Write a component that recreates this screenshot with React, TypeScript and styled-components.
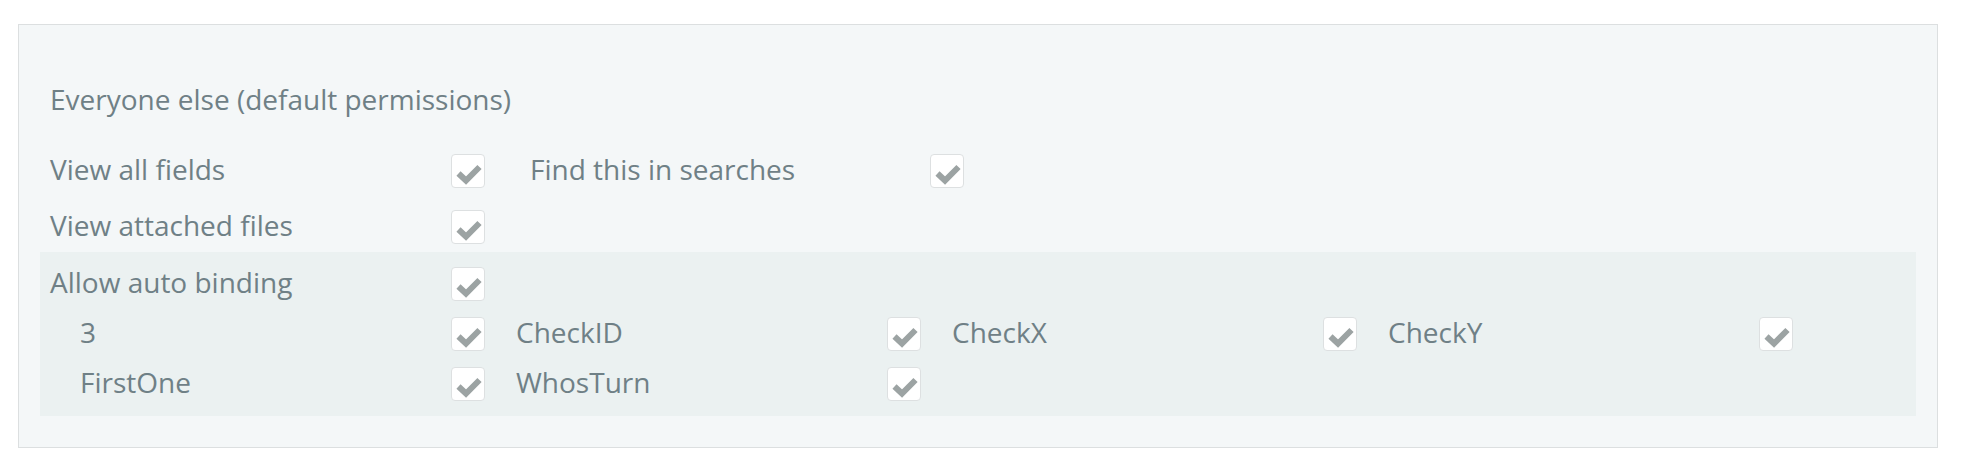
import React from "react";
import styled, { createGlobalStyle } from "styled-components";

const GlobalStyle = createGlobalStyle`
  body {
    margin: 0;
    background: #ffffff;
    font-family: "Open Sans", "Liberation Sans", sans-serif;
  }
`;

const Panel = styled.div`
  box-sizing: border-box;
  width: 1920px;
  margin: 24px 0 0 18px;
  padding: 55px 21px 31px;
  border: 1px solid #dcdfe0;
  background-color: #f4f7f8;
`;

const Heading = styled.div`
  padding-left: 10px;
  margin-bottom: 28px;
  font-size: 28px;
  line-height: 38px;
  color: #6f8086;
`;

const TopRows = styled.div`
  display: flex;
  flex-direction: column;
  gap: 6px;
  padding: 0 10px;
`;

const Row = styled.div`
  display: flex;
  align-items: center;
  height: 50px;
`;

const Cell = styled.div<{ $label: number; $width: number }>`
  display: grid;
  grid-template-columns: ${(p) => p.$label}px 34px;
  align-items: center;
  width: ${(p) => p.$width}px;
`;

const Label = styled.span`
  padding-bottom: 4px;
  font-size: 28px;
  line-height: 38px;
  color: #6f8086;
  white-space: nowrap;
`;

const Binding = styled.div`
  background-color: #ebf1f1;
  padding: 7px 10px;
`;

const SubGrid = styled.div`
  display: grid;
  grid-template-columns: repeat(4, 436px);
  grid-auto-rows: 50px;
  padding-left: 30px;
`;

const Box = styled.span`
  box-sizing: border-box;
  display: block;
  width: 34px;
  height: 34px;
  border: 1.5px solid #dde0e1;
  border-radius: 4px;
  background-color: #ffffff;
  svg {
    display: block;
  }
`;

function Check() {
  return (
    <Box>
      <svg width="31" height="31" viewBox="0 0 31 31">
        <polyline
          points="6.5,18.5 14,25.5 27.5,12"
          fill="none"
          stroke="#9ca3a3"
          strokeWidth="6"
        />
      </svg>
    </Box>
  );
}

const subFields = ["3", "CheckID", "CheckX", "CheckY", "FirstOne", "WhosTurn"];

function App() {
  return (
    <>
      <GlobalStyle />
      <Panel>
        <Heading>Everyone else (default permissions)</Heading>
        <TopRows>
          <Row>
            <Cell $label={401} $width={480}>
              <Label>View all fields</Label>
              <Check />
            </Cell>
            <Cell $label={400} $width={480}>
              <Label>Find this in searches</Label>
              <Check />
            </Cell>
          </Row>
          <Row>
            <Cell $label={401} $width={480}>
              <Label>View attached files</Label>
              <Check />
            </Cell>
          </Row>
        </TopRows>
        <Binding>
          <Row>
            <Cell $label={401} $width={480}>
              <Label>Allow auto binding</Label>
              <Check />
            </Cell>
          </Row>
          <SubGrid>
            {subFields.map((f) => (
              <Cell key={f} $label={371} $width={436}>
                <Label>{f}</Label>
                <Check />
              </Cell>
            ))}
          </SubGrid>
        </Binding>
      </Panel>
    </>
  );
}

export default App;
